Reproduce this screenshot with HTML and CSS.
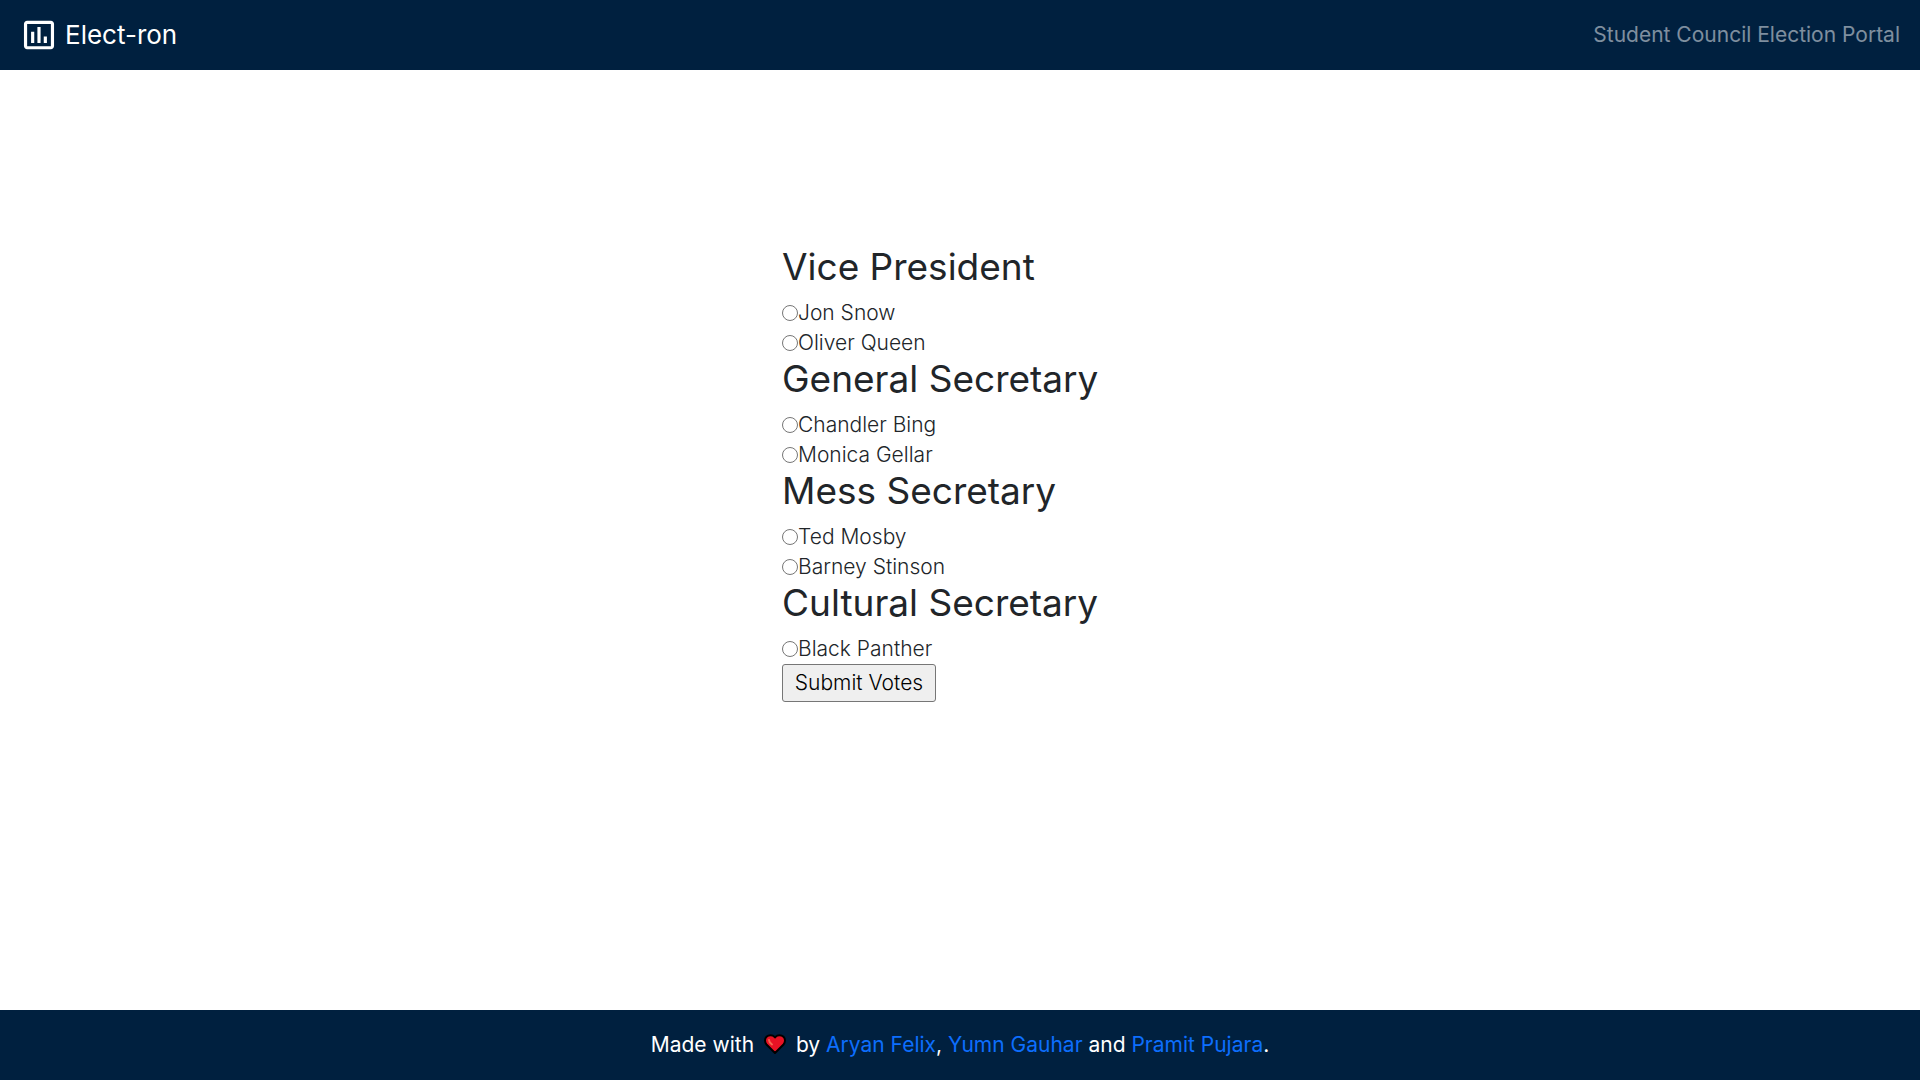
FILE: index.html
```html
<!DOCTYPE html>
<html lang="en">
<head>
  <meta charset="utf-8">
  <meta name="viewport" content="width=device-width, initial-scale=1">
  <title>Elect-ron</title>
  <link rel="stylesheet" href="styles.css">
</head>
<body>
  <header class="navbar">
    <a class="brand" href="#">
      <svg class="brand-icon" viewBox="0 0 24 24" aria-hidden="true">
        <path fill="currentColor" d="M9 17H7v-7h2v7zm4 0h-2V7h2v10zm4 0h-2v-4h2v4zm2.500 2.100h-15V5h15v14.100zm0-16.100h-15c-1.100 0-2 .9-2 2v14c0 1.100.9 2 2 2h15c1.100 0 2-.9 2-2V5c0-1.100-.9-2-2-2z"/>
      </svg>
      <span>Elect-ron</span>
    </a>
    <span class="tagline">Student Council Election Portal</span>
  </header>

  <main class="content">
    <form class="ballot">
      <h2 class="position">Vice President</h2>
      <label class="candidate"><input class="choice" type="radio" name="vice-president">Jon Snow</label>
      <label class="candidate"><input class="choice" type="radio" name="vice-president">Oliver Queen</label>
      <h2 class="position">General Secretary</h2>
      <label class="candidate"><input class="choice" type="radio" name="general-secretary">Chandler Bing</label>
      <label class="candidate"><input class="choice" type="radio" name="general-secretary">Monica Gellar</label>
      <h2 class="position">Mess Secretary</h2>
      <label class="candidate"><input class="choice" type="radio" name="mess-secretary">Ted Mosby</label>
      <label class="candidate"><input class="choice" type="radio" name="mess-secretary">Barney Stinson</label>
      <h2 class="position">Cultural Secretary</h2>
      <label class="candidate"><input class="choice" type="radio" name="cultural-secretary">Black Panther</label>
      <button class="submit" type="submit">Submit Votes</button>
    </form>
  </main>

  <footer class="footer">
    <p class="credits">Made with <svg class="heart" viewBox="0 0 22 20" role="img" aria-label="love"><path fill="#e81224" stroke="#000" stroke-width="2" stroke-linejoin="round" d="M11 19 2.500 10.500C.5 8.300.5 4.800 2.500 2.800c2.200-2.200 6-2.200 8 0l.5.600.5-.600c2-2.200 5.800-2.200 8 0 2 2 2 5.500 0 7.700z"/><path fill="none" stroke="#f4674f" stroke-width="2" stroke-linecap="round" d="M5 6c0 1.500 1 3 3 4.500"/></svg> by <a class="author" href="#">Aryan Felix</a>, <a class="author" href="#">Yumn Gauhar</a> and <a class="author" href="#">Pramit Pujara</a>.</p>
  </footer>
</body>
</html>
```
FILE: styles.css
```css
* {
  box-sizing: border-box;
}

body {
  display: flex;
  flex-direction: column;
  min-height: 100vh;
  margin: 0;
  background: #fff;
  color: #212529;
  font-family: Inter, "Open Sans", sans-serif;
  font-size: 21px;
  font-weight: 300;
  line-height: 30px;
}

.navbar,
.footer {
  display: flex;
  align-items: center;
  min-height: 70px;
  padding: 0 20px;
  background: #00203f;
}

.navbar {
  justify-content: space-between;
}

.brand {
  display: flex;
  align-items: center;
  gap: 7px;
  color: #fff;
  font-size: 26px;
  font-weight: 400;
  text-decoration: none;
}

.brand-icon {
  width: 38px;
  height: 38px;
}

.tagline {
  color: rgba(255, 255, 255, 0.5);
  font-weight: 400;
}

.content {
  display: flex;
  flex: 1;
  align-items: center;
  justify-content: center;
  padding-bottom: 132px;
}

.ballot {
  display: flex;
  flex-direction: column;
  align-items: flex-start;
  width: 356px;
}

.position {
  margin: 0 0 10px;
  font-size: 37px;
  font-weight: 400;
  line-height: 42px;
}

.candidate {
  display: flex;
  align-items: center;
}

.choice {
  width: 16px;
  height: 16px;
  margin: 0;
}

.submit {
  min-width: 154px;
  padding: 3px 8px;
  border: 1px solid #767676;
  border-radius: 3px;
  background: #efefef;
  color: #000;
  font: inherit;
}

.footer {
  justify-content: center;
  color: #fff;
  font-weight: 400;
}

.credits {
  margin: 0;
}

.heart {
  width: 22px;
  height: 20px;
  margin: 0 4px;
  vertical-align: -2px;
}

.author {
  color: #0d6efd;
  text-decoration: none;
}
```
